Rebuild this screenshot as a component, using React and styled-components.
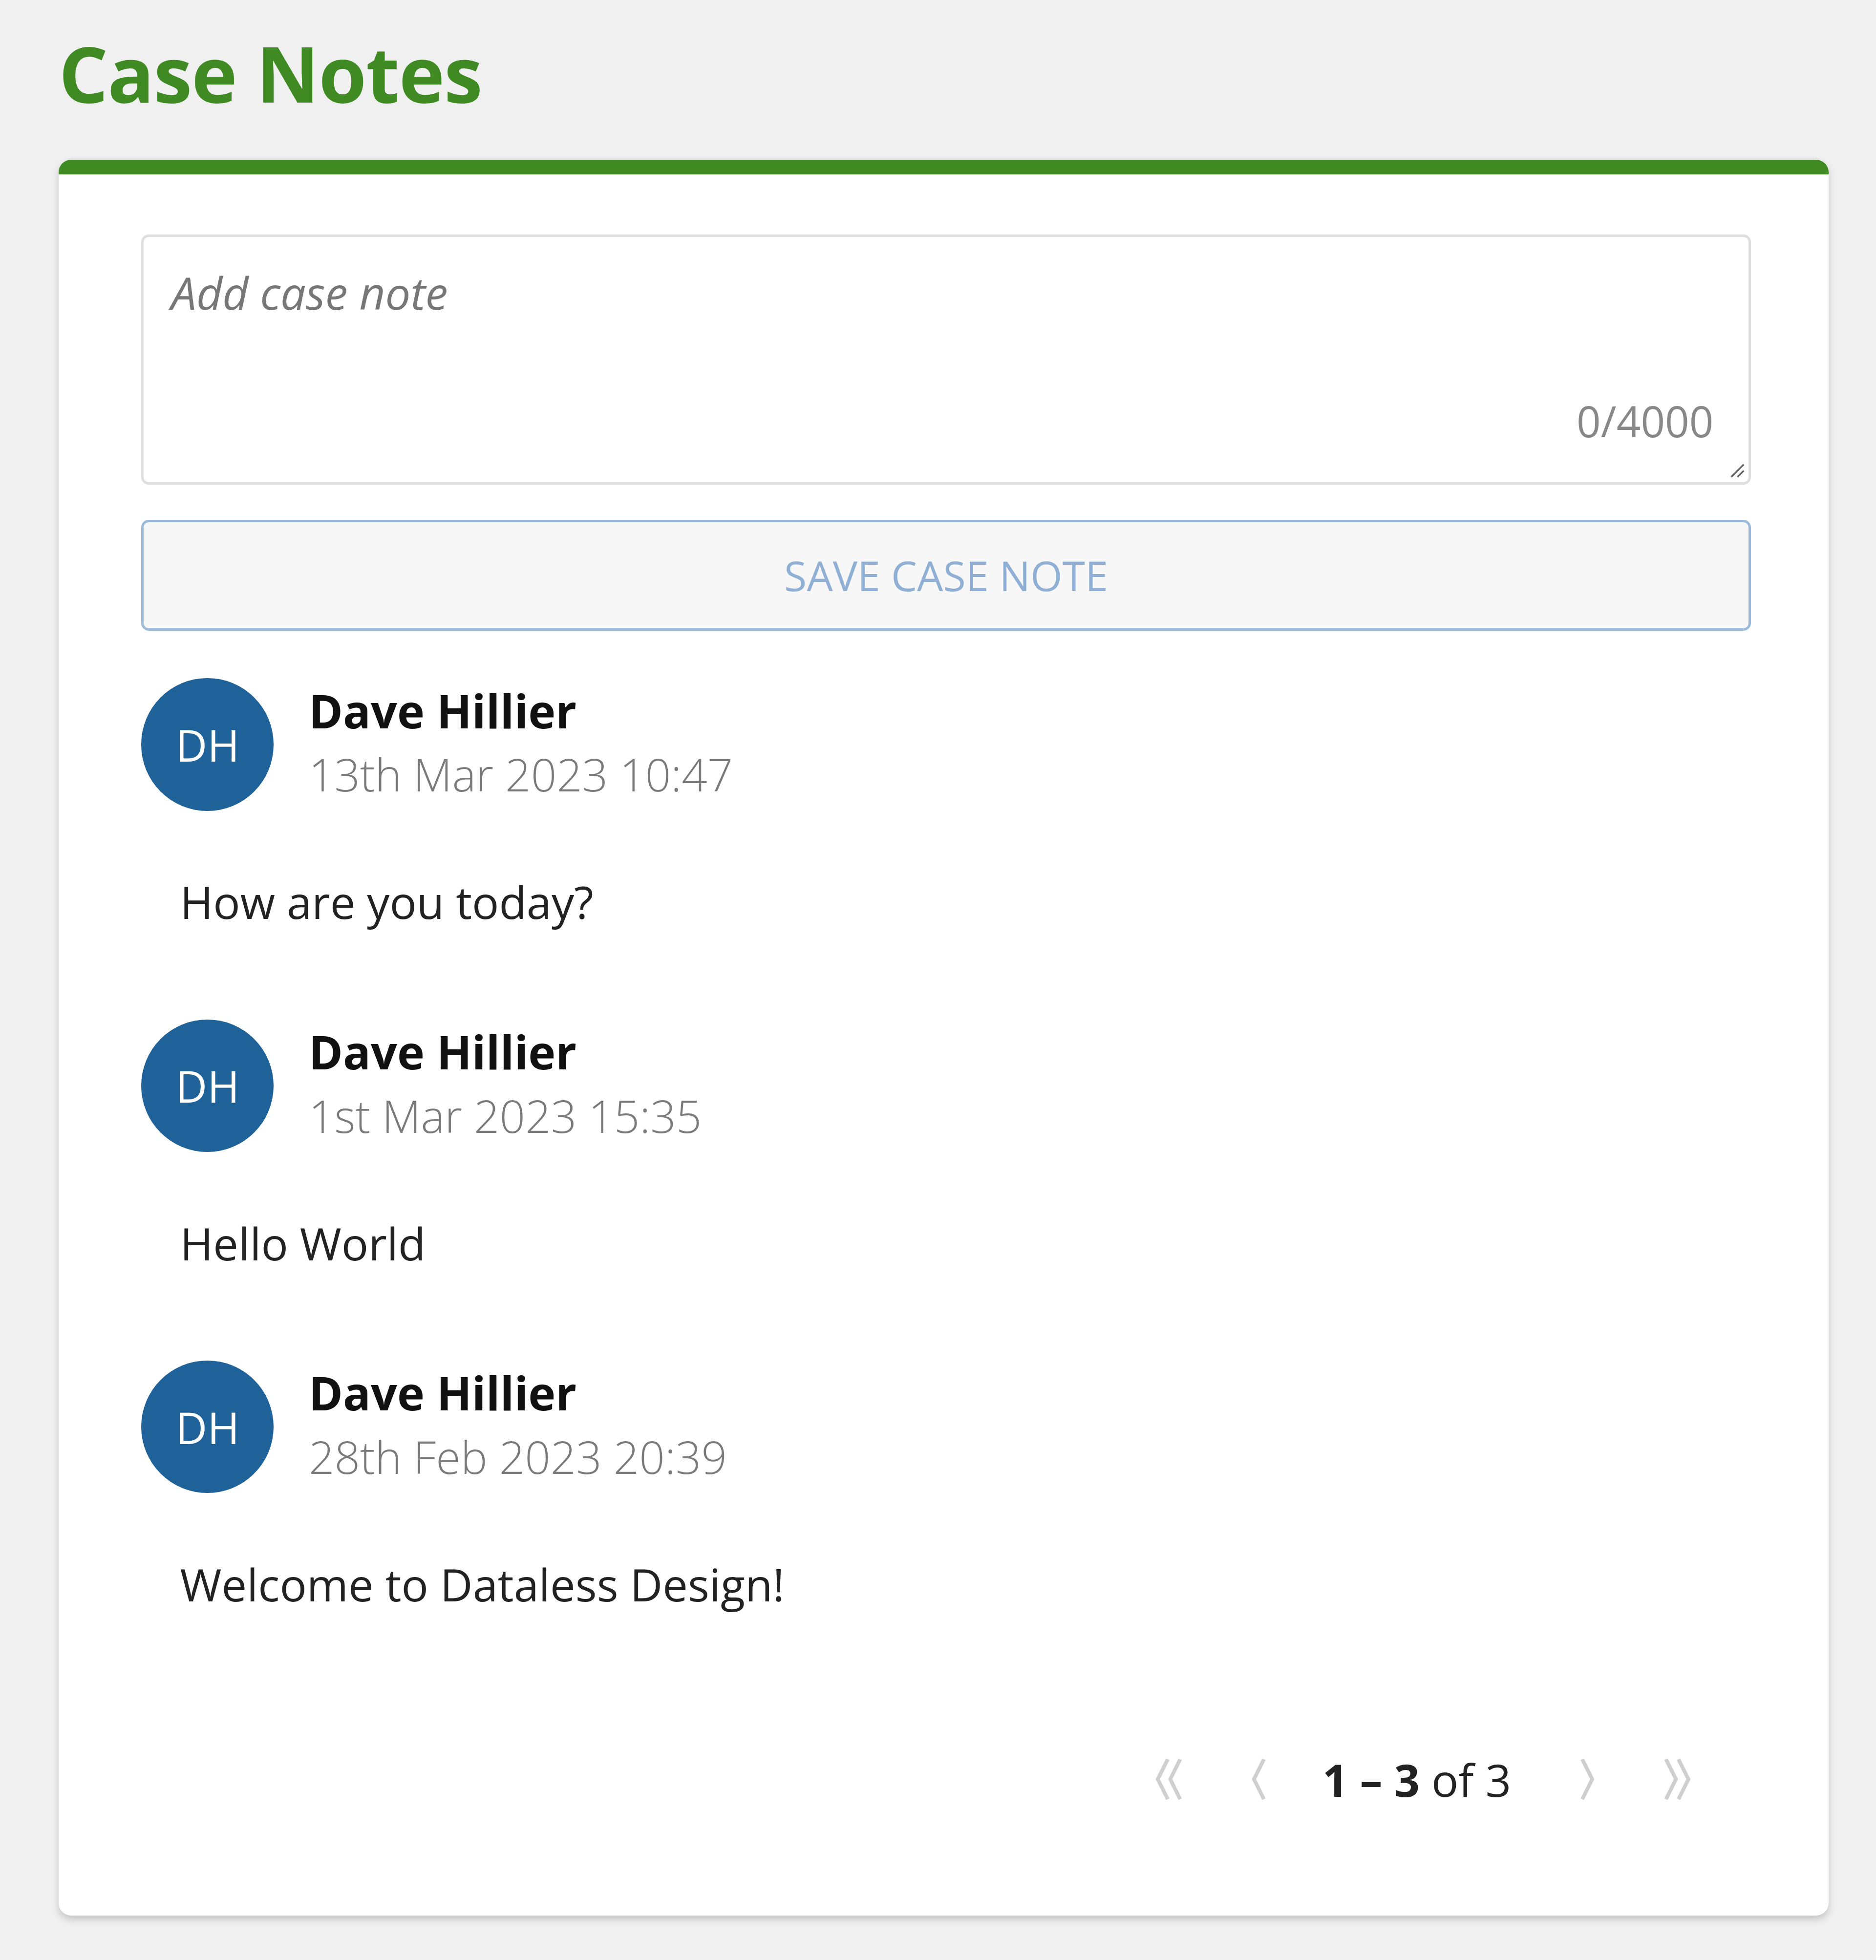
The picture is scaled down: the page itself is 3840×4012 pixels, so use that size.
import React from 'react';
import styled, { createGlobalStyle } from 'styled-components';

const Global = createGlobalStyle`
  html, body { margin: 0; background: #f0f0f0; }
  body { font-family: "Open Sans", "Liberation Sans", sans-serif; }
`;

// designed at display scale, zoomed up to the 3840 wide screenshot
const Page = styled.div`
  zoom: 2.5583;
  width: 1501px;
  min-height: 1568px;
  box-sizing: border-box;
  padding: 18px 38px 0 47px;
`;

const Title = styled.h1`
  margin: 0;
  font-size: 62px;
  line-height: 80px;
  font-weight: 700;
  color: #3f8a22;
  letter-spacing: -0.5px;
`;

const Card = styled.div`
  margin-top: 30px;
  background: #fff;
  border-top: 12px solid #3f8a22;
  border-radius: 10px;
  box-shadow: 0 3px 6px rgba(0, 0, 0, 0.18);
  padding: 48px 62px 79px 66px;
`;

const NoteBox = styled.div`
  position: relative;
  height: 200px;
  box-sizing: border-box;
  border: 2px solid #dedede;
  border-radius: 6px;
  padding: 20px 22px;
`;

const Placeholder = styled.div`
  font-size: 36px;
  font-style: italic;
  color: #777;
`;

const Counter = styled.div`
  position: absolute;
  right: 28px;
  bottom: 26px;
  font-size: 34px;
  color: #888;
`;

const Grip = styled.svg`
  position: absolute;
  right: 3px;
  bottom: 3px;
`;

const SaveButton = styled.button`
  display: block;
  width: 100%;
  height: 89px;
  margin-top: 28px;
  border: 2px solid #9cbad9;
  border-radius: 6px;
  background: #f7f7f7;
  color: #8fb0d4;
  font-family: inherit;
  font-size: 33px;
  font-weight: 500;
`;

const Note = styled.div`
  margin-top: ${p => (p.first ? 38 : 69)}px;
`;

const Header = styled.div`
  display: flex;
  align-items: center;
  gap: 28px;
`;

const Avatar = styled.div`
  width: 106px;
  height: 106px;
  border-radius: 50%;
  background: #1f6199;
  color: #fff;
  font-size: 35px;
  display: flex;
  align-items: center;
  justify-content: center;
`;

const Name = styled.div`
  font-size: 37px;
  font-weight: 700;
  color: #111;
  line-height: 48px;
`;

const Date = styled.div`
  font-size: 36px;
  color: #7a7a7a;
  line-height: 54px;
  font-weight: 300;
`;

const Body = styled.div`
  margin-top: 48px;
  padding-left: 31px;
  font-size: 36px;
  line-height: 50px;
  color: #222;
`;

const Pager = styled.div`
  margin-top: 101px;
  display: flex;
  justify-content: flex-end;
  align-items: center;
  gap: 0;
  height: 60px;
  padding-right: 36px;
`;

const PageText = styled.div`
  font-size: 36px;
  color: #222;
  margin: 0 36px 0 26px;
  b { font-weight: 700; }
`;

const Chev = ({ d, ml }) => (
  <svg width="50" height="50" viewBox="0 0 50 50" style={{ marginLeft: ml }}>
    <path d={d} fill="none" stroke="#cfcfcf" strokeWidth="3" />
  </svg>
);

const notes = [
  { date: '13th Mar 2023 10:47', text: 'How are you today?' },
  { date: '1st Mar 2023 15:35', text: 'Hello World' },
  { date: '28th Feb 2023 20:39', text: 'Welcome to Dataless Design!' },
];

export default function App() {
  return (
    <>
      <Global />
      <Page>
        <Title>Case Notes</Title>
        <Card>
          <NoteBox>
            <Placeholder>Add case note</Placeholder>
            <Counter>0/4000</Counter>
            <Grip width="14" height="14" viewBox="0 0 14 14">
              <path d="M13 3 L3 13 M13 8 L8 13" stroke="#666" strokeWidth="1.4" />
            </Grip>
          </NoteBox>
          <SaveButton>SAVE CASE NOTE</SaveButton>
          {notes.map((n, i) => (
            <Note key={i} first={i === 0}>
              <Header>
                <Avatar>DH</Avatar>
                <div>
                  <Name>Dave Hillier</Name>
                  <Date>{n.date}</Date>
                </div>
              </Header>
              <Body>{n.text}</Body>
            </Note>
          ))}
          <Pager>
            <Chev d="M22 9 L14 25 L22 41 M32 9 L24 25 L32 41" />
            <Chev ml={20} d="M29 9 L21 25 L29 41" />
            <PageText><b>1 – 3</b> of 3</PageText>
            <Chev d="M21 9 L29 25 L21 41" />
            <Chev ml={20} d="M18 9 L26 25 L18 41 M28 9 L36 25 L28 41" />
          </Pager>
        </Card>
      </Page>
    </>
  );
}
